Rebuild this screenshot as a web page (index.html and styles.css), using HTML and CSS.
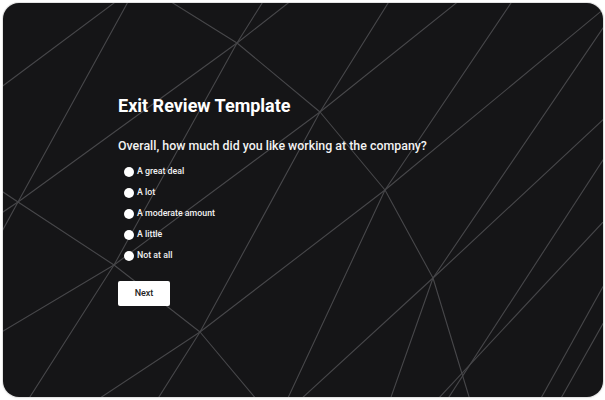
FILE: index.html
```html
<!DOCTYPE html>
<html lang="en">
<head>
<meta charset="utf-8">
<title>Exit Review Template</title>
<link rel="stylesheet" href="styles.css">
</head>
<body>
<div class="frame">
  <svg class="bg-lines" viewBox="0 0 605 400" aria-hidden="true">
    <g fill="none" stroke="#47474a" stroke-width="1.1" stroke-linejoin="round">
      <polyline points="118,0 0,88"/>
      <polyline points="129,0 18,202 0,235"/>
      <polyline points="168,0 237,43 320,112 385,190 433,278 463,377 470,400"/>
      <polyline points="264,0 237,43 114,265 28,400"/>
      <polyline points="292,0 237,43 18,202 0,214"/>
      <polyline points="390,0 320,112 200,332 157,400"/>
      <polyline points="460,0 320,112 114,265 0,333"/>
      <polyline points="0,190 18,202 114,265 200,332 257,400"/>
      <polyline points="513,0 385,190 287,400"/>
      <polyline points="605,8 385,190 200,332 97,400"/>
      <polyline points="605,25 433,278 390,400"/>
      <polyline points="605,118 433,278 300,400"/>
      <polyline points="605,157 447,400"/>
      <polyline points="605,220 437,400"/>
      <polyline points="605,283 540,400"/>
      <polyline points="605,320 560,400"/>
    </g>
  </svg>
  <div class="content">
    <h1 class="title">Exit Review Template</h1>
    <p class="question">Overall, how much did you like working at the company?</p>
    <ul class="options">
      <li class="option"><span class="radio"></span><span class="label">A great deal</span></li>
      <li class="option"><span class="radio"></span><span class="label">A lot</span></li>
      <li class="option"><span class="radio"></span><span class="label">A moderate amount</span></li>
      <li class="option"><span class="radio"></span><span class="label">A little</span></li>
      <li class="option"><span class="radio"></span><span class="label">Not at all</span></li>
    </ul>
    <button class="next" type="button">Next</button>
  </div>
</div>
</body>
</html>
```
FILE: styles.css
```css
* { box-sizing: border-box; }

html, body {
  margin: 0;
  padding: 0;
  background: #ffffff;
}

body {
  font-family: Roboto, "Liberation Sans", sans-serif;
  width: 605px;
  height: 400px;
  padding: 3px;
}

.frame {
  position: relative;
  width: 600px;
  height: 394px;
  border-radius: 16px;
  background: #151517;
  overflow: hidden;
  box-shadow: 0 0 0 1px #e3e3e3, 0 1px 3px rgba(0, 0, 0, 0.08);
}

.bg-lines {
  position: absolute;
  left: -3px;
  top: -3px;
  width: 605px;
  height: 400px;
}

.content {
  position: relative;
  display: flex;
  flex-direction: column;
  align-items: flex-start;
  padding: 92px 0 0 115px;
}

.title {
  margin: 0;
  font-size: 18px;
  line-height: 22px;
  font-weight: 700;
  color: #ffffff;
}

.question {
  margin: 20px 0 0;
  font-size: 12.4px;
  line-height: 18px;
  font-weight: 500;
  color: #f2f2f2;
}

.options {
  list-style: none;
  margin: 6px 0 0;
  padding: 0 0 0 6px;
  display: flex;
  flex-direction: column;
}

.option {
  display: flex;
  align-items: center;
  gap: 3px;
  height: 21px;
  line-height: 21px;
  font-size: 8.8px;
  font-weight: 500;
  color: #f2f2f2;
}

.radio {
  width: 10px;
  height: 10px;
  border-radius: 50%;
  background: #ffffff;
  flex: none;
}

.next {
  margin-top: 14.5px;
  width: 52px;
  height: 25px;
  border: none;
  border-radius: 2px;
  background: #ffffff;
  color: #222222;
  font-family: inherit;
  font-size: 9px;
  font-weight: 500;
  padding: 0;
}
```
